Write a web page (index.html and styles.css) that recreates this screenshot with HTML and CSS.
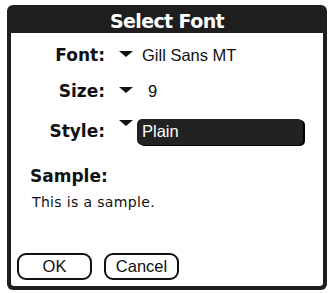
FILE: index.html
```html
<!DOCTYPE html>
<html>
<head>
<meta charset="utf-8">
<link rel="stylesheet" href="styles.css">
</head>
<body>
<div class="dialog">
  <div class="title">Select Font</div>
  <div class="panel">
    <div class="row row-font">
      <span class="label">Font:</span>
      <span class="value"><span class="tri"></span><span class="val-font">Gill Sans MT</span></span>
    </div>
    <div class="row row-size">
      <span class="label">Size:</span>
      <span class="value"><span class="tri"></span><span class="val-size">9</span></span>
    </div>
    <div class="row row-style">
      <span class="label">Style:</span>
      <span class="value"><span class="tri tri-style"></span><span class="sel">Plain</span></span>
    </div>
    <div class="sample-label">Sample:</div>
    <div class="sample-text">This is a sample.</div>
    <div class="buttons">
      <button class="btn">OK</button>
      <button class="btn">Cancel</button>
    </div>
  </div>
</div>
</body>
</html>
```
FILE: styles.css
```css
html, body {
  margin: 0;
  padding: 0;
  background: #fff;
}
body {
  width: 334px;
  height: 293px;
  overflow: hidden;
  color: #111;
}
.dialog {
  margin: 5px 0 0 7px;
  width: 320px;
  height: 285px;
  box-sizing: border-box;
  background: #1e1e1e;
  border-radius: 6px;
  padding: 0 4px 4px;
  display: flex;
  flex-direction: column;
}
.title {
  height: 28px;
  box-sizing: border-box;
  padding-top: 4px;
  line-height: 24px;
  text-align: center;
  color: #fff;
  font-family: "DejaVu Sans", sans-serif;
  font-weight: bold;
  font-size: 19px;
  letter-spacing: -0.6px;
}
.panel {
  flex: 1;
  background: #fff;
  border-radius: 0 0 3px 3px;
  display: flex;
  flex-direction: column;
}
.row {
  display: grid;
  grid-template-columns: 94px 1fr;
  column-gap: 14px;
  align-items: baseline;
  height: 24px;
}
.row-font { margin-top: 10px; }
.row-size { margin-top: 12px; }
.row-style { margin-top: 16px; height: 27px; }
.label {
  text-align: right;
  font-family: "DejaVu Sans", sans-serif;
  font-weight: bold;
  font-size: 17px;
  line-height: 24px;
}
.value {
  font-family: "Liberation Sans", sans-serif;
  font-size: 16.5px;
  line-height: 24px;
  white-space: nowrap;
}
.tri {
  display: inline-block;
  width: 0;
  height: 0;
  border-left: 7px solid transparent;
  border-right: 7px solid transparent;
  border-top: 6px solid #111;
  vertical-align: 4px;
  margin-right: 9px;
}
.val-size { margin-left: 6px; }
.tri-style {
  vertical-align: 11px;
  margin-right: 4px;
}
.sel {
  display: inline-block;
  box-sizing: border-box;
  width: 166px;
  height: 26px;
  padding: 0 5px 2px;
  line-height: 25px;
  background: #222;
  color: #fff;
  border-radius: 5px;
  box-shadow: 2px 1px 0 #000;
}
.sample-label {
  margin: 18px 0 0 19px;
  font-family: "DejaVu Sans", sans-serif;
  font-weight: bold;
  font-size: 17px;
  line-height: 24px;
}
.sample-text {
  margin: 4px 0 0 21px;
  font-family: "DejaVu Sans", sans-serif;
  font-size: 14px;
  letter-spacing: 0.35px;
  line-height: 20px;
}
.buttons {
  margin-top: auto;
  padding: 0 0 6px 6px;
  display: flex;
  gap: 12px;
}
.btn {
  width: 75px;
  height: 27px;
  box-sizing: border-box;
  padding: 0;
  margin: 0;
  border: 2px solid #111;
  border-radius: 9px;
  background: #fff;
  color: #111;
  font-family: "Liberation Sans", sans-serif;
  font-size: 16.5px;
  line-height: 23px;
  text-align: center;
}
```
